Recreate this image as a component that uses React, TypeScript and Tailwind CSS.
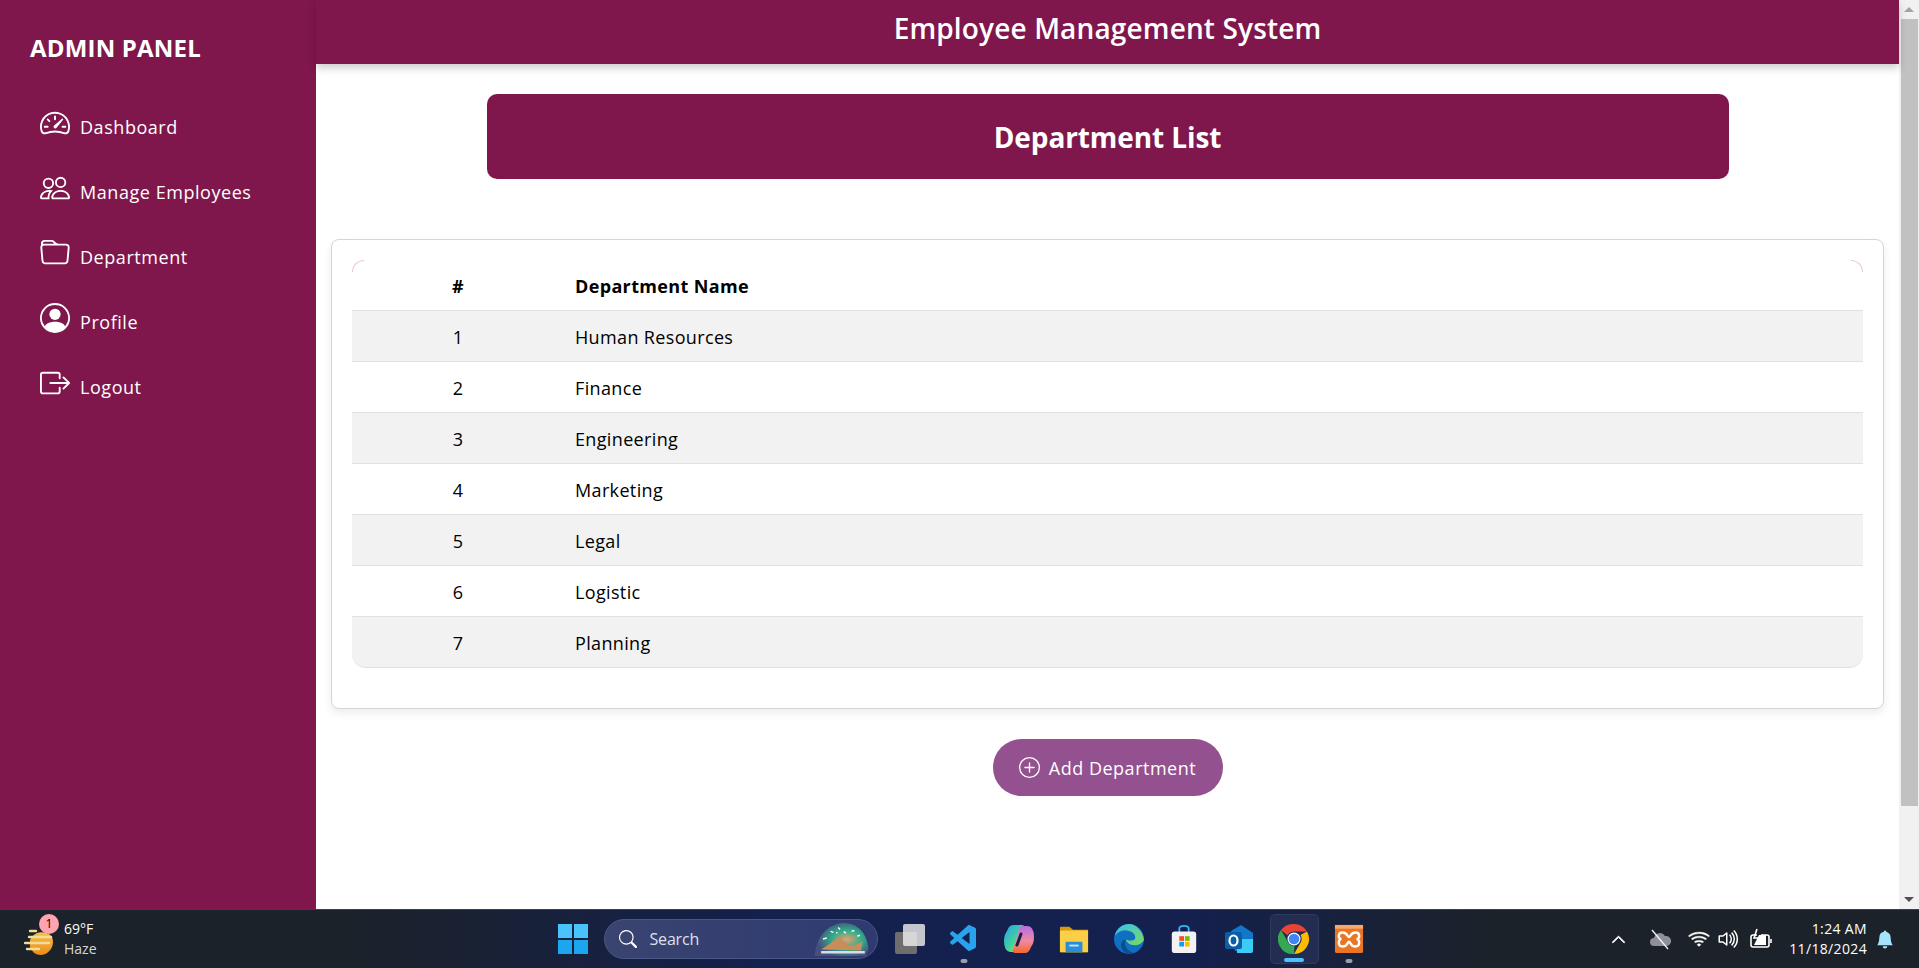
import React from "react";
import { BsSpeedometer2, BsPeople, BsFolder, BsPersonCircle, BsBoxArrowRight, BsPlusCircle, BsSearch, BsChevronUp, BsWifi, BsVolumeUp, BsBellFill } from "react-icons/bs";
import { VscVscode } from "react-icons/vsc";

const FONT = "font-['Open_Sans','Noto_Sans',sans-serif]";

const nav = [
  { label: "Dashboard", Icon: BsSpeedometer2 },
  { label: "Manage Employees", Icon: BsPeople },
  { label: "Department", Icon: BsFolder },
  { label: "Profile", Icon: BsPersonCircle },
  { label: "Logout", Icon: BsBoxArrowRight },
];
const departments = ["Human Resources", "Finance", "Engineering", "Marketing", "Legal", "Logistic", "Planning"];

function Sidebar() {
  return (
    <aside className="w-[316px] shrink-0 bg-[#7f174c] text-white">
      <div className="pl-[30px] pt-[31px] text-[24px] leading-[34px] font-bold tracking-[0.2px]">ADMIN PANEL</div>
      <nav className="pt-[30px] pl-[40px]">
        {nav.map(({ label, Icon }) => (
          <div key={label} className="flex h-[65px] items-center gap-[10px]">
            <Icon className="h-[30px] w-[30px] shrink-0 -translate-y-[5px]" />
            <span className="text-[18px] tracking-[0.55px]">{label}</span>
          </div>
        ))}
      </nav>
    </aside>
  );
}

function DeptTable() {
  return (
    <div className="mx-[15px] mt-[60px] rounded-[8px] border border-[#d5d5d5] bg-white px-[20px] pt-[20px] pb-[41px] shadow-[0_4px_8px_rgba(0,0,0,0.08)]">
      <div className="relative">
        <div className="absolute left-0 top-0 h-[12px] w-[12px] rounded-tl-[12px] border-l border-t border-[#e8c6d6]" />
        <div className="absolute right-0 top-0 h-[12px] w-[12px] rounded-tr-[12px] border-r border-t border-[#e8c6d6]" />
        <table className="w-full table-fixed border-collapse text-[18px] tracking-[0.35px] text-black">
          <thead>
            <tr className="h-[50px] border-b border-[#dee2e6]">
              <th className="w-[212px] pt-[3px] text-center font-bold">#</th>
              <th className="pl-[11px] pt-[3px] text-left font-bold">Department Name</th>
            </tr>
          </thead>
          <tbody>
            {departments.map((d, i) => (
              <tr key={d} className={`h-[51px] ${i === 6 ? "" : "border-b border-[#dee2e6]"} ${i % 2 === 0 ? "bg-[#f2f2f2]" : "bg-white"}`}>
                <td className={`pt-[3px] text-center ${i === 6 ? "rounded-bl-[14px] shadow-[0_1px_0_#dee2e6]" : ""}`}>{i + 1}</td>
                <td className={`pl-[11px] pt-[3px] ${i === 6 ? "rounded-br-[14px] shadow-[0_1px_0_#dee2e6]" : ""}`}>{d}</td>
              </tr>
            ))}
          </tbody>
        </table>
      </div>
    </div>
  );
}

function Main() {
  return (
    <main className="min-w-0 flex-1 bg-white">
      <header className="relative flex h-[64px] items-center justify-center bg-[#7f174c] pb-[8px] text-[28px] font-semibold tracking-[0.15px] text-white shadow-[0_4px_8px_rgba(0,0,0,0.2)]">
        Employee Management System
      </header>
      <div className="mx-auto mt-[30px] flex h-[85px] w-[1242px] items-center justify-center rounded-[10px] bg-[#7f174c] text-[28px] font-bold tracking-[-0.1px] text-white">
        Department List
      </div>
      <DeptTable />
      <div className="mt-[30px] flex justify-center">
        <button className="flex h-[57px] w-[230px] items-center justify-center gap-[9px] rounded-full bg-[#945190] text-[18px] tracking-[0.5px] text-white">
          <BsPlusCircle className="h-[21px] w-[21px]" />
          <span className="pt-[1px]">Add Department</span>
        </button>
      </div>
    </main>
  );
}

function Scrollbar() {
  return (
    <div className="flex w-[20px] shrink-0 flex-col items-center bg-[#f1f1f1]">
      <div className="flex h-[19px] items-center justify-center">
        <div className="h-0 w-0 border-x-[5px] border-b-[5px] border-x-transparent border-b-[#a3a3a3]" />
      </div>
      <div className="h-[787px] w-[17px] bg-[#c1c1c1]" />
      <div className="flex-1" />
      <div className="flex h-[19px] items-center justify-center">
        <div className="h-0 w-0 border-x-[5px] border-t-[5px] border-x-transparent border-t-[#505050]" />
      </div>
    </div>
  );
}

function Slot({ children, dot, active }: { children: React.ReactNode; dot?: boolean; active?: boolean }) {
  return (
    <div className={`relative flex h-[50px] w-[49px] items-center justify-center rounded-[5px] ${active ? "border border-[#2f3a5e] bg-[#232d52]" : ""}`}>
      {children}
      {dot && <div className="absolute bottom-[1px] left-1/2 h-[4px] w-[7px] -translate-x-1/2 rounded-full bg-[#9a9ea8]" />}
      {active && <div className="absolute bottom-[1px] left-1/2 h-[4px] w-[20px] -translate-x-1/2 rounded-full bg-[#4cc2ff]" />}
    </div>
  );
}

function Taskbar() {
  return (
    <footer className="relative flex h-[59px] shrink-0 items-center border-t border-[#3a4048] bg-[linear-gradient(90deg,#1c2229_0%,#1c2229_18%,#14204e_40%,#14204e_62%,#1c2229_78%,#1c2229_100%)] text-[14px] text-white">
      <div className="relative ml-[24px] flex w-[40px] items-center">
        <svg viewBox="0 0 32 26" className="h-[26px] w-[32px] translate-y-[3px]">
          <defs>
            <linearGradient id="sun" x1="0" y1="0" x2="0" y2="1">
              <stop offset="0" stopColor="#f3c24b" />
              <stop offset="1" stopColor="#ef8a17" />
            </linearGradient>
          </defs>
          <path d="M6 11a13 13 0 0 1 22-3 13 13 0 0 1-11 18A12 12 0 0 1 6 18z" fill="url(#sun)" />
          <path d="M6 2h6M5 8h22M1 14h24M3 20h12" stroke="#f2dc9a" strokeWidth="2.400" strokeLinecap="round" />
        </svg>
        <div className="absolute -top-[12px] left-[15px] flex h-[20px] w-[20px] items-center justify-center rounded-full bg-[#ffa3b0] text-[12px] text-black">1</div>
      </div>
      <div className="leading-[20px]">
        <div className="text-[14px]">69°F</div>
        <div className="text-[14px] text-[#d6d6d6]">Haze</div>
      </div>

      <div className="ml-[461px] flex h-[30px] w-[30px] shrink-0 flex-wrap content-between justify-between">
        <div className="h-[14px] w-[14px] bg-[#49c3fb]" />
        <div className="h-[14px] w-[14px] bg-[#49c3fb]" />
        <div className="h-[14px] w-[14px] bg-[#1ca6f0]" />
        <div className="h-[14px] w-[14px] bg-[#1ca6f0]" />
      </div>

      <div className="ml-[16px] flex h-[40px] w-[274px] shrink-0 items-center rounded-full border border-[#4b5684] bg-[linear-gradient(90deg,#3a4470,#2f3a70)] pl-[14px] pr-[5px]">
        <BsSearch className="h-[18px] w-[18px] text-white" />
        <span className="ml-[13px] flex-1 text-[16px] tracking-[-0.2px] text-[#dde0ea]">Search</span>
        <svg viewBox="0 0 60 40" className="h-[38px] w-[60px]">
          <defs>
            <radialGradient id="glow" cx="0.6" cy="0.5" r="0.55">
              <stop offset="0" stopColor="#e8a070" />
              <stop offset="0.5" stopColor="#2fae8c" />
              <stop offset="1" stopColor="#46507c" />
            </radialGradient>
          </defs>
          <path d="M1 38 Q4 8 30 3 Q54 3 58 30 L55 38z" fill="url(#glow)" />
          <path d="M8 31 Q22 22 27 17 Q36 30 44 26 Q50 24 52 22 L50 32z" fill="#c98d5a" />
          <path d="M8 34h46" stroke="#d8dbe8" strokeWidth="2.500" />
          <path d="M10 20l4-1M18 12l3 1M26 8l2 2M32 12l2 2M40 12l3-1M46 17l3-1M24 13l1 1" stroke="#fff" strokeWidth="1.500" />
        </svg>
      </div>

      <div className="ml-[17px] flex w-[34px] shrink-0 items-center">
        <div className="relative h-[30px] w-[30px]">
          <div className="absolute bottom-0 left-0 h-[22px] w-[22px] rounded-[2px] bg-[#6e6e6e]" />
          <div className="absolute right-0 top-0 h-[22px] w-[22px] rounded-[2px] bg-[#f0f0f0] opacity-80" />
        </div>
      </div>

      <div className="ml-[11px] flex shrink-0 gap-[6px]">
        <Slot dot><VscVscode className="h-[32px] w-[32px] text-[#2aa3ef]" /></Slot>
        <Slot>
          <svg viewBox="0 0 32 32" className="h-[32px] w-[32px]">
            <defs>
              <linearGradient id="cpA" x1="0" y1="0" x2="1" y2="1">
                <stop offset="0" stopColor="#2f9df0" />
                <stop offset="0.55" stopColor="#3fd49a" />
                <stop offset="1" stopColor="#f6d23a" />
              </linearGradient>
              <linearGradient id="cpB" x1="0" y1="0" x2="0" y2="1">
                <stop offset="0" stopColor="#b66bea" />
                <stop offset="0.55" stopColor="#f08aa0" />
                <stop offset="1" stopColor="#f4672f" />
              </linearGradient>
            </defs>
            <path d="M10 2h9q3 0 2 3l-6 21q-1 3-4 3H7Q1 28 1 18q0-6 3-10 2-6 6-6z" fill="url(#cpA)" />
            <path d="M22 30h-10q-3 0-2-3l6-21q1-3 4-3h5q6 1 6 11 0 6-3 10-2 6-6 6z" fill="url(#cpB)" />
            <path d="M18 11l-4 11" stroke="#14204e" strokeWidth="3" strokeLinecap="round" />
          </svg>
        </Slot>
        <Slot>
          <svg viewBox="0 0 32 32" className="h-[32px] w-[30px]">
            <path d="M1 4q0-1 1-1h9l4 3h16v24H1z" fill="#d99a0d" />
            <rect x="1" y="7" width="30" height="23" rx="1" fill="#fbd046" />
            <rect x="7" y="19" width="18" height="11" rx="1" fill="#2b8fd6" />
            <rect x="11" y="22" width="10" height="2" fill="#bfe3fa" />
          </svg>
        </Slot>
        <Slot>
          <svg viewBox="0 0 32 32" className="h-[32px] w-[32px]">
            <defs>
              <linearGradient id="edge" x1="0" y1="0" x2="1" y2="1">
                <stop offset="0" stopColor="#35c1f1" />
                <stop offset="1" stopColor="#7ed957" />
              </linearGradient>
            </defs>
            <circle cx="16" cy="16" r="15" fill="#0f6fc0" />
            <path d="M31 17C30 8 23 1 16 1 9 1 3 6 2 13c3-5 9-7 14-5 5 1 7 5 6 8-2 2-7 2-9 0 0 5 8 8 14 5 2-1 3-3 4-4z" fill="url(#edge)" />
            <path d="M13 16c-3 5 0 12 8 14-8 3-13-3-13-8 0-3 2-5 5-6z" fill="#0b4f8f" />
          </svg>
        </Slot>
        <Slot>
          <svg viewBox="0 0 32 32" className="h-[32px] w-[30px]">
            <path d="M11 9V5q0-3 5-3t5 3v4" fill="none" stroke="#3bb3ee" strokeWidth="2" />
            <rect x="3" y="8" width="26" height="23" rx="3" fill="#f2f2f2" />
            <rect x="11" y="13" width="5" height="5" fill="#f25022" />
            <rect x="17" y="13" width="5" height="5" fill="#7fba00" />
            <rect x="11" y="19" width="5" height="5" fill="#00a4ef" />
            <rect x="17" y="19" width="5" height="5" fill="#ffb900" />
          </svg>
        </Slot>
        <Slot>
          <svg viewBox="0 0 32 32" className="h-[32px] w-[32px]">
            <path d="M8 8l10-6 12 8v18H12z" fill="#1177c9" />
            <path d="M14 16h16v12a2 2 0 0 1-2 2H14z" fill="#3ccbf4" />
            <rect x="2" y="9" width="17" height="17" rx="2" fill="#0a5ea8" />
            <ellipse cx="10.500" cy="17.500" rx="4" ry="5" fill="none" stroke="#fff" strokeWidth="2.200" />
          </svg>
        </Slot>
        <Slot active>
          <svg viewBox="0 0 32 32" className="h-[32px] w-[32px]">
            <path d="M16 1a15 15 0 0 1 13 7.500H16a7.500 7.500 0 0 0-6.500 3.700L3 7a15 15 0 0 1 13-6z" fill="#ea4335" />
            <path d="M29 8.500a15 15 0 0 1-13 22.500l6.500-11.200A7.500 7.500 0 0 0 22.500 12z" fill="#fbbc04" />
            <path d="M16 31A15 15 0 0 1 3 7l6.500 11.200a7.500 7.500 0 0 0 7 4.800z" fill="#34a853" />
            <circle cx="16" cy="16" r="6.500" fill="#fff" />
            <circle cx="16" cy="16" r="5.300" fill="#4285f4" />
          </svg>
        </Slot>
        <Slot dot>
          <svg viewBox="0 0 32 32" className="h-[32px] w-[30px]">
            <rect x="1" y="1" width="30" height="30" rx="2" fill="#ea7525" />
            <rect x="1" y="1" width="30" height="4" fill="#f7a86c" />
            <path d="M9 9c6 0 5 5 7 5s1-5 7-5c5 0 5 7 1 7 4 0 4 8-1 8-6 0-5-5-7-5s-1 5-7 5c-5 0-5-8-1-8-4 0-4-7 1-7z" fill="none" stroke="#fff" strokeWidth="2.600" />
          </svg>
        </Slot>
      </div>

      <div className="ml-auto flex items-center">
        <BsChevronUp className="h-[15px] w-[15px]" strokeWidth={1} stroke="currentColor" />
        <svg viewBox="0 0 24 24" className="ml-[22px] h-[24px] w-[24px]">
          <path d="M6 19a4 4 0 0 1 0-8 6 6 0 0 1 11-2 5 5 0 0 1 2 10z" fill="#8d9096" />
          <path d="M4 3l16 19" stroke="#f0f0f0" strokeWidth="1.400" />
        </svg>
        <BsWifi className="ml-[16px] h-[22px] w-[22px]" strokeWidth={0.4} stroke="currentColor" />
        <BsVolumeUp className="ml-[7px] h-[24px] w-[24px]" />
        <svg viewBox="0 0 24 24" className="ml-[7px] h-[24px] w-[24px]" fill="none" stroke="#fff" strokeWidth="1.600">
          <path d="M9 8H5a2 2 0 0 0-2 2v8a2 2 0 0 0 2 2h14a2 2 0 0 0 2-2v-8a2 2 0 0 0-2-2h-6" />
          <path d="M23 12v4" />
          <path d="M11 8h7v10H6z" fill="#fff" stroke="none" />
          <path d="M9 2L6 11h5l-3 7" stroke="#fff" />
        </svg>
        <div className="ml-[17px] text-right text-[14px] leading-[20px] tracking-[0.35px]">
          <div>1:24 AM</div>
          <div>11/18/2024</div>
        </div>
        <BsBellFill className="ml-[9px] mr-[25px] h-[19px] w-[18px] text-[#a5e3fb]" />
      </div>
    </footer>
  );
}

export default function App() {
  return (
    <div className={`flex h-[968px] w-full flex-col overflow-hidden ${FONT}`}>
      <div className="flex min-h-0 flex-1">
        <Sidebar />
        <Main />
        <Scrollbar />
      </div>
      <Taskbar />
    </div>
  );
}
